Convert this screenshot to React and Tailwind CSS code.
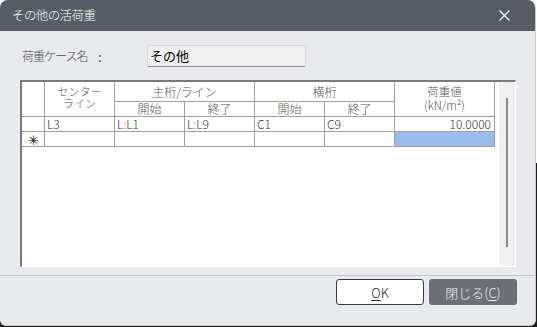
import React from "react";

const FONT = "font-['Noto_Sans_CJK_JP','Noto_Sans',sans-serif]";

const cell = "border-r border-b border-[#a0a0a0] p-0";

export default function App() {
  const rows = [
    { mark: "", center: "L3", ms: "L:L1", me: "L:L9", cs: "C1", ce: "C9", value: "10.0000" },
    { mark: "✳", center: "", ms: "", me: "", cs: "", ce: "", value: "", selected: true },
  ];

  return (
    <div className={`w-[537px] h-[327px] bg-[linear-gradient(to_bottom,#ffffff_50%,#1c1c1c_50%)] ${FONT}`}>
      <div className="w-[536px] h-[326px] flex flex-col bg-[#e9eaee] rounded-t-[8px] rounded-b-[6px] border-r border-b border-[#c9cbcf] overflow-hidden">
        {/* title bar */}
        <div className="h-[31px] shrink-0 bg-[#575d65] flex items-center justify-between pl-[12px] pr-[25px]">
          <span className="text-[12.5px] tracking-[-0.6px] leading-none text-white font-light">その他の活荷重</span>
          <svg width="11" height="11" viewBox="0 0 11 11">
            <path d="M0.5 0.5 L10.5 10.5 M10.5 0.5 L0.5 10.5" stroke="#ffffff" strokeWidth="1.1" fill="none" />
          </svg>
        </div>

        {/* case name */}
        <div className="flex items-center h-[22px] mt-[14px] pl-[22px]">
          <span className="w-[76px] shrink-0 whitespace-nowrap text-[12px] tracking-[-1px] text-[#4a4a4a] leading-none font-light">荷重ケース名</span>
          <span className="w-[49px] shrink-0 text-[13px] text-[#4a4a4a] leading-none">:</span>
          <div className="w-[159px] h-[22px] bg-[#efefef] border border-[#dcdcdc] border-b-[#8f8f8f] rounded-[2px] pl-[2px] pt-[2px] text-[13px] leading-[16px] text-black">
            その他
          </div>
        </div>

        {/* grid */}
        <div className="ml-[20px] mt-[13px] w-[496px] h-[187px] border-t-2 border-l-2 border-[#7a7a7a] border-r border-b border-r-white border-b-white flex">
          <div className="w-[477px] h-full bg-white">
            <table className="border-separate border-spacing-0 table-fixed text-[12px] leading-none font-light">
              <colgroup>
                <col className="w-[23px]" />
                <col className="w-[70px]" />
                <col className="w-[70px]" />
                <col className="w-[70px]" />
                <col className="w-[70px]" />
                <col className="w-[70px]" />
                <col className="w-[100px]" />
              </colgroup>
              <thead className="text-[#555]">
                <tr className="h-[20px]">
                  <th rowSpan={2} className={cell}></th>
                  <th rowSpan={2} className={`${cell} align-top font-light`}>
                    <div className="flex flex-col items-center pt-[3px] text-[11px] leading-[12px]">
                      <span>センター</span>
                      <span>ライン</span>
                    </div>
                  </th>
                  <th colSpan={2} className={`${cell} font-light`}>主桁/ライン</th>
                  <th colSpan={2} className={`${cell} font-light`}>横桁</th>
                  <th rowSpan={2} className={`${cell} align-top font-light`}>
                    <div className="flex flex-col items-center pt-[2px] text-[11.5px] leading-[14px]">
                      <span>荷重値</span>
                      <span>(kN/m²)</span>
                    </div>
                  </th>
                </tr>
                <tr className="h-[15px]">
                  <th className={`${cell} font-light`}>開始</th>
                  <th className={`${cell} font-light`}>終了</th>
                  <th className={`${cell} font-light`}>開始</th>
                  <th className={`${cell} font-light`}>終了</th>
                </tr>
              </thead>
              <tbody className="text-[#333]">
                {rows.map((r, i) => (
                  <tr key={i} className="h-[15px]">
                    <td className={`${cell} text-center text-black text-[13px]`}>{r.mark}</td>
                    <td className={`${cell} pl-[2px]`}>{r.center}</td>
                    <td className={`${cell} pl-[2px]`}>{r.ms}</td>
                    <td className={`${cell} pl-[2px]`}>{r.me}</td>
                    <td className={`${cell} pl-[2px]`}>{r.cs}</td>
                    <td className={`${cell} pl-[2px]`}>{r.ce}</td>
                    <td className={`${cell} pr-[3px] text-right ${r.selected ? "bg-[#9bbcec]" : ""}`}>{r.value}</td>
                  </tr>
                ))}
              </tbody>
            </table>
          </div>
          <div className="w-[16px] h-full bg-[#f0f0f0] flex justify-center pt-[16px]">
            <div className="w-[2px] h-[149px] bg-[#8a8a8a]" />
          </div>
        </div>

        {/* separator */}
        <div className="mt-[8px] h-px bg-[#c2c6ca]" />

        {/* buttons */}
        <div className="flex justify-end gap-[5px] mt-[3px] pr-[18px]">
          <button className="w-[88px] h-[26px] bg-white border border-[#3a3a3a] rounded-[3px] text-[13px] text-[#222] leading-none font-light">
            <span className="underline underline-offset-2">O</span>K
          </button>
          <button className="w-[88px] h-[26px] bg-[#6b6f76] rounded-[3px] text-[13px] text-[#eeeeee] leading-none font-light">
            閉じる(<span className="underline underline-offset-2">C</span>)
          </button>
        </div>
      </div>
    </div>
  );
}
